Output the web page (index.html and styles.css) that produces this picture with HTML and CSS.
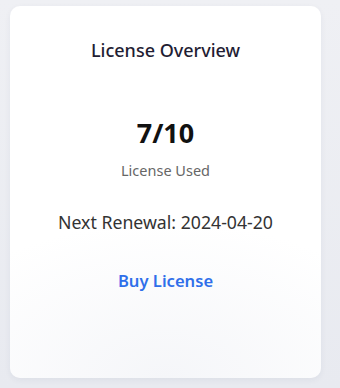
FILE: index.html
```html
<!DOCTYPE html>
<html lang="en">
<head>
    <meta charset="UTF-8">
    <meta name="viewport" content="width=device-width, initial-scale=1.0">
    <title>License Overview</title>
    <link rel="stylesheet" href="styles.css">
</head>
<body>
    <div class="tarjeta-licencia">
        <h2 class="titulo">License Overview</h2>
        <div class="uso">
            <p class="uso-numero">7/10</p>
            <p class="uso-texto">License Used</p>
        </div>
        <p class="renovacion">Next Renewal: 2024-04-20</p>
        <a href="#" class="comprar">Buy License</a>
    </div>
</body>
</html>
```
FILE: styles.css
```css
html, body {
    height: 100%;
}

body {
    font-family: "Noto Sans", sans-serif;
    background: linear-gradient(180deg, #eff0f4 0%, #e8eaf0 100%);
    margin: 0;
    padding: 6px 19px 10px 10px;
    box-sizing: border-box;
}

.tarjeta-licencia {
    height: 372px;
    box-sizing: border-box;
    background: radial-gradient(ellipse 120% 60% at 50% 100%, #f5f6f9 0%, #ffffff 70%);
    border-radius: 10px;
    box-shadow: 0 2px 6px rgba(40, 50, 90, 0.06);
    display: flex;
    flex-direction: column;
    align-items: center;
    padding-top: 32px;
    text-align: center;
}

.titulo {
    margin: 0;
    font-size: 18px;
    line-height: 24px;
    font-weight: 500;
    color: #1f1d33;
}

.uso {
    margin-top: 55px;
}

.uso-numero {
    margin: 0;
    font-size: 27px;
    font-weight: 700;
    color: #111;
    line-height: 32px;
}

.uso-texto {
    margin: 11px 0 0;
    font-size: 14.5px;
    line-height: 20px;
    color: #666;
}

.renovacion {
    margin: 30px 0 0;
    font-size: 17.7px;
    line-height: 24px;
    color: #333;
}

.comprar {
    margin-top: 35px;
    font-size: 16.6px;
    line-height: 24px;
    font-weight: 600;
    color: #2f6fea;
    text-decoration: none;
}
```
